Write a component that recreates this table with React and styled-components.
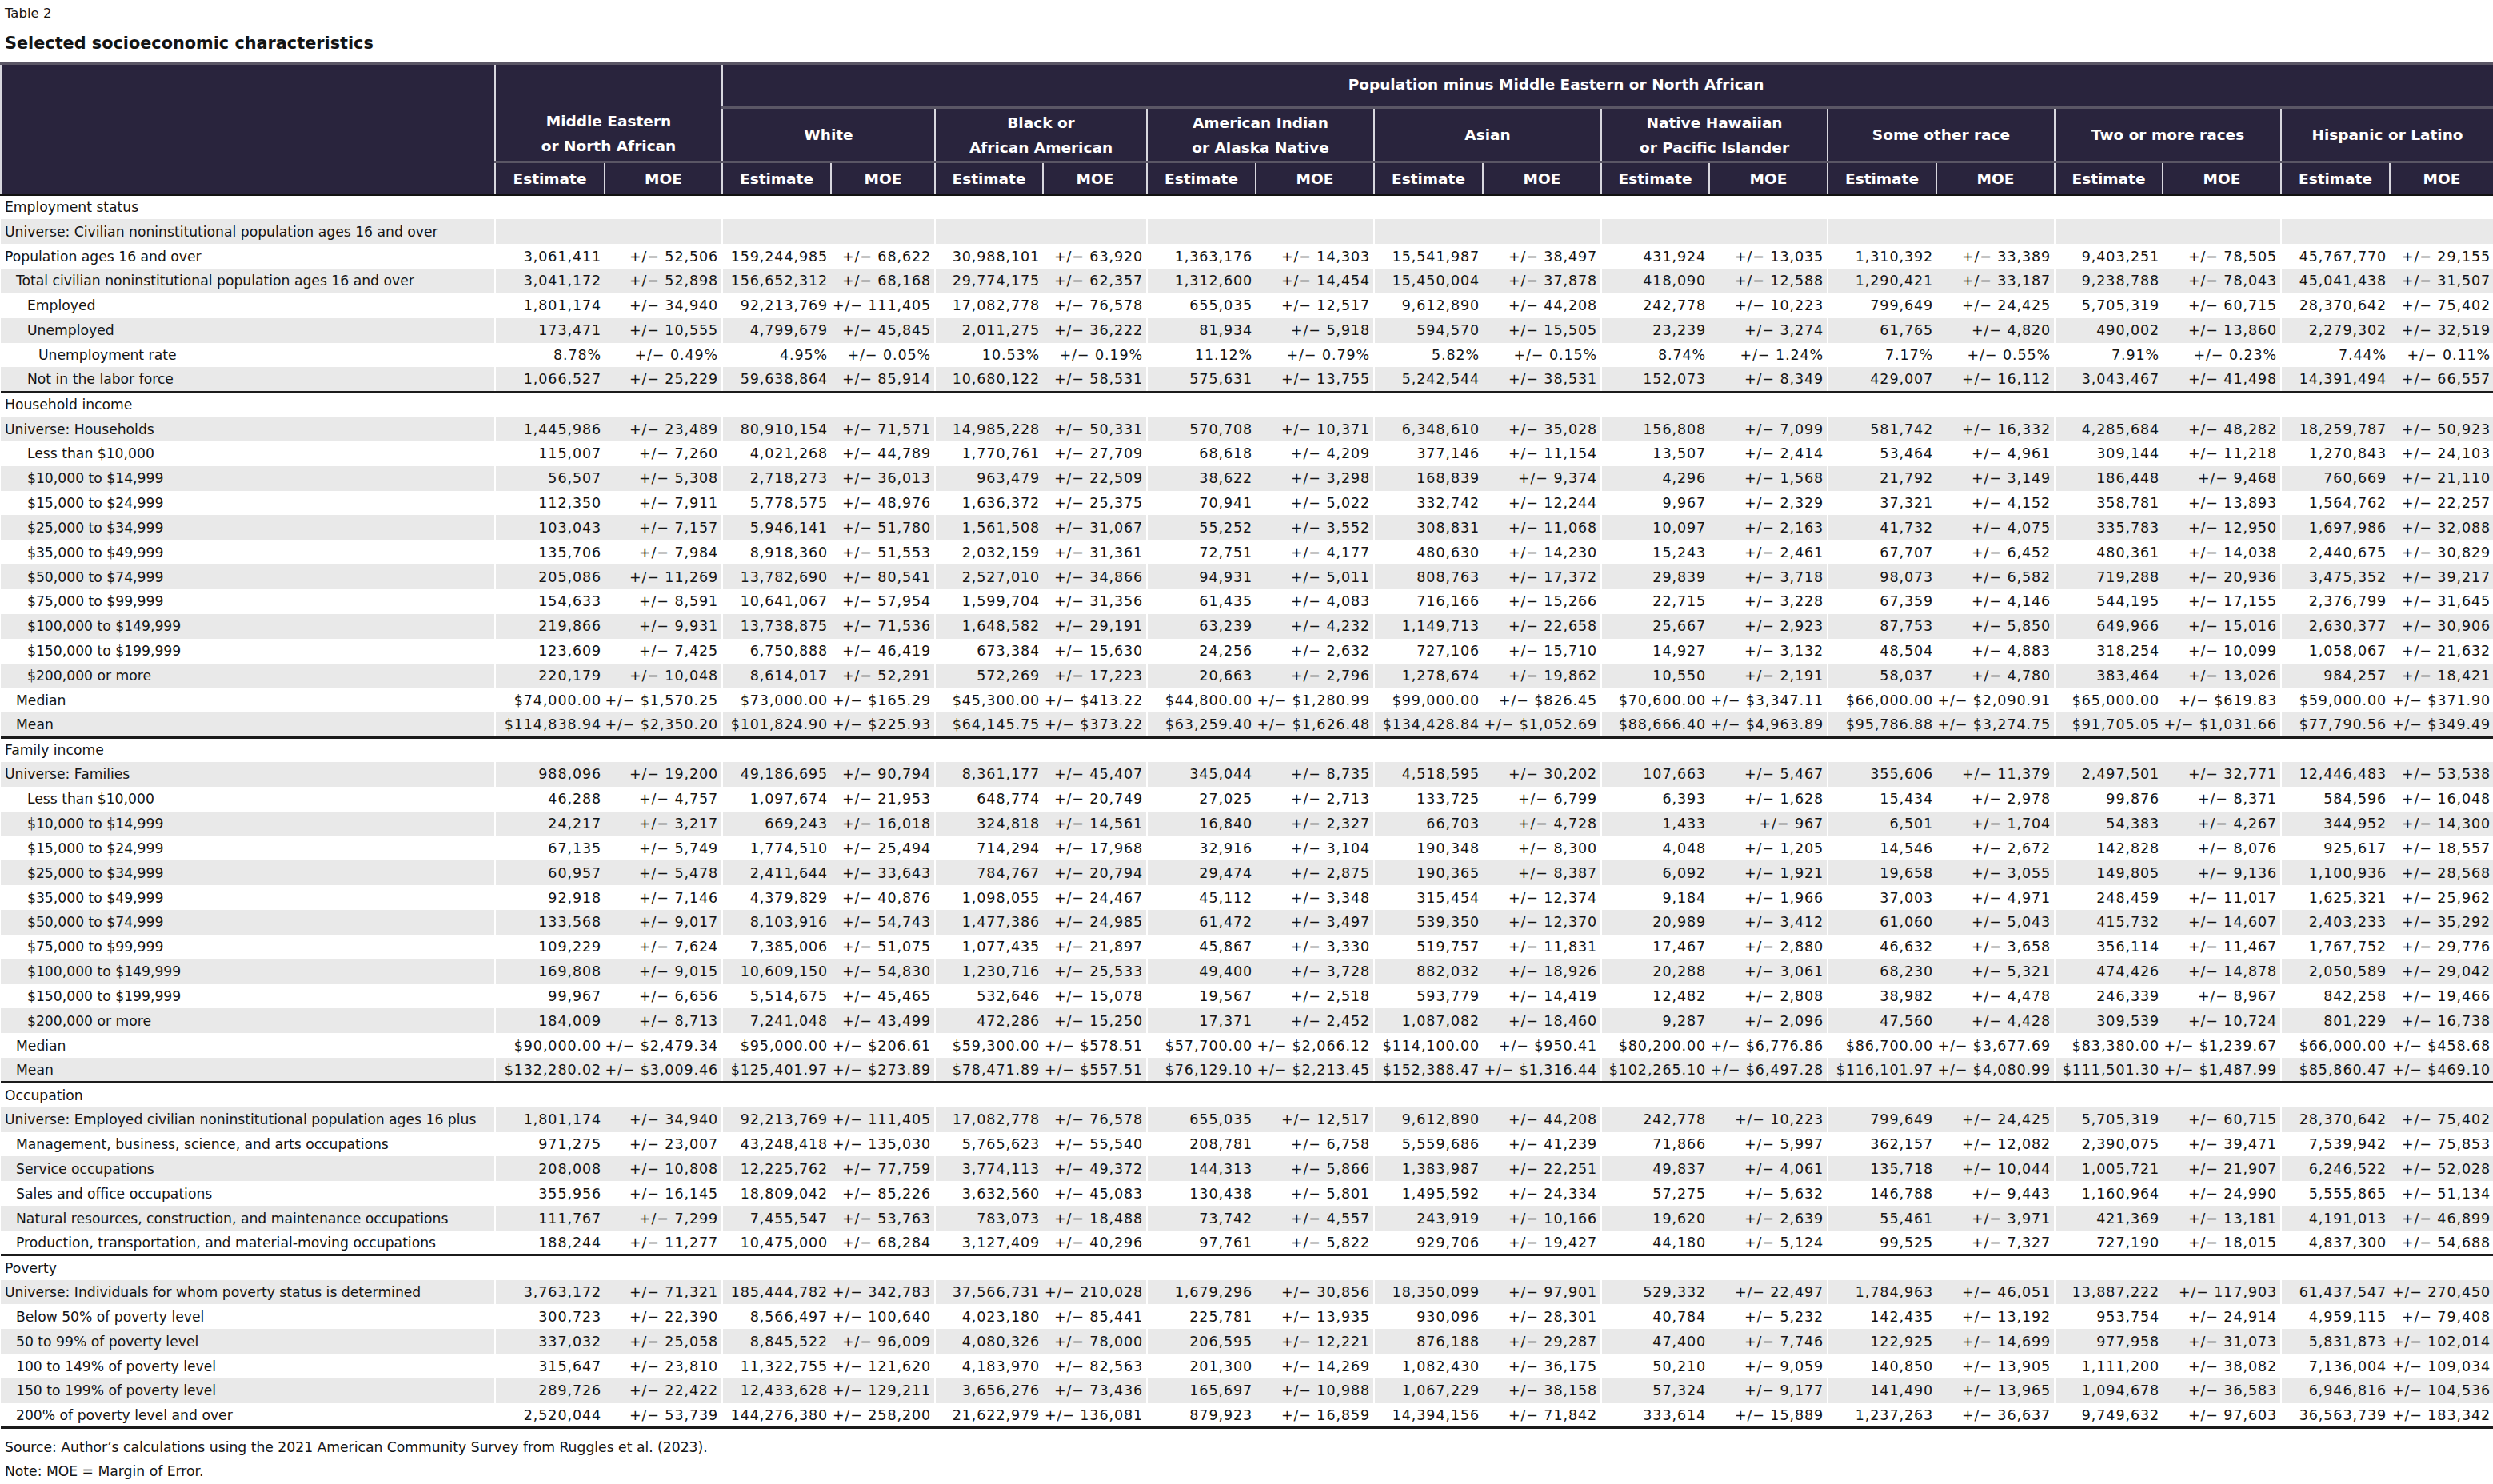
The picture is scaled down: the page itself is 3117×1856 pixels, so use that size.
import React from "react";
import styled, { createGlobalStyle } from "styled-components";

const GlobalStyle = createGlobalStyle`
  html, body {
    margin: 0;
    padding: 0;
    background: #ffffff;
  }
  body {
    font-family: "DejaVu Sans", "Liberation Sans", sans-serif;
    color: #141414;
  }
`;

const Page = styled.div`
  width: 3117px;
`;

const Caption = styled.div`
  padding: 5px 6px 11px;
`;

const TableNo = styled.div`
  font-size: 16.5px;
  line-height: 24px;
`;

const Heading = styled.div`
  margin-top: 12px;
  font-size: 20.8px;
  font-weight: bold;
  line-height: 26px;
`;

const Table = styled.table`
  width: 3117px;
  table-layout: fixed;
  border-collapse: collapse;
  border-bottom: 3px solid #1b1b1b;
`;

const HeadRow = styled.tr`
  height: ${(p) => p.$h}px;
`;

const HeadCell = styled.th`
  background: #29243d;
  color: #ffffff;
  font-size: 18.5px;
  font-weight: bold;
  line-height: 31px;
  text-align: center;
  vertical-align: ${(p) => (p.$bottom ? "bottom" : "middle")};
  padding: ${(p) => (p.$bottom ? "0 4px 3px" : p.$top ? "0 134px 4px 4px" : "0 4px")};
  border: 2px solid #d8d7de;
  border-top: 3px solid #5a5665;
  ${(p) => p.$last && "border-bottom: 2px solid #121212;"}
`;

const BodyRow = styled.tr`
  height: 30.85px;
  background: ${(p) => (p.$shade ? "#e9e9e9" : "#ffffff")};
  ${(p) => p.$sep && "border-top: 3px solid #1b1b1b;"}
`;

const LabelCell = styled.td`
  font-size: 17.2px;
  padding: 0 4px 0 ${(p) => 5 + p.$level * 14}px;
  white-space: nowrap;
  overflow: hidden;
`;

const ValueCell = styled.td`
  font-size: 17.5px;
  letter-spacing: 0.9px;
  text-align: right;
  padding: 0 4px 0 0;
  white-space: nowrap;
  ${(p) => p.$first && "border-left: 2px solid #ffffff;"}
`;

const Footer = styled.div`
  padding: 8px 6px 0;
  font-size: 17.2px;
  line-height: 30px;
`;

const widths = [618, 137, 147, 136, 130, 135, 130, 136, 148, 136, 148, 135, 148, 136, 148, 135, 148, 136, 130];

const groups = [
  ["White"],
  ["Black or", "African American"],
  ["American Indian", "or Alaska Native"],
  ["Asian"],
  ["Native Hawaiian", "or Pacific Islander"],
  ["Some other race"],
  ["Two or more races"],
  ["Hispanic or Latino"],
];

const sections = [
  {
    title: "Employment status",
    rows: [
      ["Universe: Civilian noninstitutional population ages 16 and over", 0, null],
      ["Population ages 16 and over", 0, "3,061,411 52,506 159,244,985 68,622 30,988,101 63,920 1,363,176 14,303 15,541,987 38,497 431,924 13,035 1,310,392 33,389 9,403,251 78,505 45,767,770 29,155"],
      ["Total civilian noninstitutional population ages 16 and over", 1, "3,041,172 52,898 156,652,312 68,168 29,774,175 62,357 1,312,600 14,454 15,450,004 37,878 418,090 12,588 1,290,421 33,187 9,238,788 78,043 45,041,438 31,507"],
      ["Employed", 2, "1,801,174 34,940 92,213,769 111,405 17,082,778 76,578 655,035 12,517 9,612,890 44,208 242,778 10,223 799,649 24,425 5,705,319 60,715 28,370,642 75,402"],
      ["Unemployed", 2, "173,471 10,555 4,799,679 45,845 2,011,275 36,222 81,934 5,918 594,570 15,505 23,239 3,274 61,765 4,820 490,002 13,860 2,279,302 32,519"],
      ["Unemployment rate", 3, "8.78% 0.49% 4.95% 0.05% 10.53% 0.19% 11.12% 0.79% 5.82% 0.15% 8.74% 1.24% 7.17% 0.55% 7.91% 0.23% 7.44% 0.11%"],
      ["Not in the labor force", 2, "1,066,527 25,229 59,638,864 85,914 10,680,122 58,531 575,631 13,755 5,242,544 38,531 152,073 8,349 429,007 16,112 3,043,467 41,498 14,391,494 66,557"],
    ],
  },
  {
    title: "Household income",
    rows: [
      ["Universe: Households", 0, "1,445,986 23,489 80,910,154 71,571 14,985,228 50,331 570,708 10,371 6,348,610 35,028 156,808 7,099 581,742 16,332 4,285,684 48,282 18,259,787 50,923"],
      ["Less than $10,000", 2, "115,007 7,260 4,021,268 44,789 1,770,761 27,709 68,618 4,209 377,146 11,154 13,507 2,414 53,464 4,961 309,144 11,218 1,270,843 24,103"],
      ["$10,000 to $14,999", 2, "56,507 5,308 2,718,273 36,013 963,479 22,509 38,622 3,298 168,839 9,374 4,296 1,568 21,792 3,149 186,448 9,468 760,669 21,110"],
      ["$15,000 to $24,999", 2, "112,350 7,911 5,778,575 48,976 1,636,372 25,375 70,941 5,022 332,742 12,244 9,967 2,329 37,321 4,152 358,781 13,893 1,564,762 22,257"],
      ["$25,000 to $34,999", 2, "103,043 7,157 5,946,141 51,780 1,561,508 31,067 55,252 3,552 308,831 11,068 10,097 2,163 41,732 4,075 335,783 12,950 1,697,986 32,088"],
      ["$35,000 to $49,999", 2, "135,706 7,984 8,918,360 51,553 2,032,159 31,361 72,751 4,177 480,630 14,230 15,243 2,461 67,707 6,452 480,361 14,038 2,440,675 30,829"],
      ["$50,000 to $74,999", 2, "205,086 11,269 13,782,690 80,541 2,527,010 34,866 94,931 5,011 808,763 17,372 29,839 3,718 98,073 6,582 719,288 20,936 3,475,352 39,217"],
      ["$75,000 to $99,999", 2, "154,633 8,591 10,641,067 57,954 1,599,704 31,356 61,435 4,083 716,166 15,266 22,715 3,228 67,359 4,146 544,195 17,155 2,376,799 31,645"],
      ["$100,000 to $149,999", 2, "219,866 9,931 13,738,875 71,536 1,648,582 29,191 63,239 4,232 1,149,713 22,658 25,667 2,923 87,753 5,850 649,966 15,016 2,630,377 30,906"],
      ["$150,000 to $199,999", 2, "123,609 7,425 6,750,888 46,419 673,384 15,630 24,256 2,632 727,106 15,710 14,927 3,132 48,504 4,883 318,254 10,099 1,058,067 21,632"],
      ["$200,000 or more", 2, "220,179 10,048 8,614,017 52,291 572,269 17,223 20,663 2,796 1,278,674 19,862 10,550 2,191 58,037 4,780 383,464 13,026 984,257 18,421"],
      ["Median", 1, "$74,000.00 $1,570.25 $73,000.00 $165.29 $45,300.00 $413.22 $44,800.00 $1,280.99 $99,000.00 $826.45 $70,600.00 $3,347.11 $66,000.00 $2,090.91 $65,000.00 $619.83 $59,000.00 $371.90"],
      ["Mean", 1, "$114,838.94 $2,350.20 $101,824.90 $225.93 $64,145.75 $373.22 $63,259.40 $1,626.48 $134,428.84 $1,052.69 $88,666.40 $4,963.89 $95,786.88 $3,274.75 $91,705.05 $1,031.66 $77,790.56 $349.49"],
    ],
  },
  {
    title: "Family income",
    rows: [
      ["Universe: Families", 0, "988,096 19,200 49,186,695 90,794 8,361,177 45,407 345,044 8,735 4,518,595 30,202 107,663 5,467 355,606 11,379 2,497,501 32,771 12,446,483 53,538"],
      ["Less than $10,000", 2, "46,288 4,757 1,097,674 21,953 648,774 20,749 27,025 2,713 133,725 6,799 6,393 1,628 15,434 2,978 99,876 8,371 584,596 16,048"],
      ["$10,000 to $14,999", 2, "24,217 3,217 669,243 16,018 324,818 14,561 16,840 2,327 66,703 4,728 1,433 967 6,501 1,704 54,383 4,267 344,952 14,300"],
      ["$15,000 to $24,999", 2, "67,135 5,749 1,774,510 25,494 714,294 17,968 32,916 3,104 190,348 8,300 4,048 1,205 14,546 2,672 142,828 8,076 925,617 18,557"],
      ["$25,000 to $34,999", 2, "60,957 5,478 2,411,644 33,643 784,767 20,794 29,474 2,875 190,365 8,387 6,092 1,921 19,658 3,055 149,805 9,136 1,100,936 28,568"],
      ["$35,000 to $49,999", 2, "92,918 7,146 4,379,829 40,876 1,098,055 24,467 45,112 3,348 315,454 12,374 9,184 1,966 37,003 4,971 248,459 11,017 1,625,321 25,962"],
      ["$50,000 to $74,999", 2, "133,568 9,017 8,103,916 54,743 1,477,386 24,985 61,472 3,497 539,350 12,370 20,989 3,412 61,060 5,043 415,732 14,607 2,403,233 35,292"],
      ["$75,000 to $99,999", 2, "109,229 7,624 7,385,006 51,075 1,077,435 21,897 45,867 3,330 519,757 11,831 17,467 2,880 46,632 3,658 356,114 11,467 1,767,752 29,776"],
      ["$100,000 to $149,999", 2, "169,808 9,015 10,609,150 54,830 1,230,716 25,533 49,400 3,728 882,032 18,926 20,288 3,061 68,230 5,321 474,426 14,878 2,050,589 29,042"],
      ["$150,000 to $199,999", 2, "99,967 6,656 5,514,675 45,465 532,646 15,078 19,567 2,518 593,779 14,419 12,482 2,808 38,982 4,478 246,339 8,967 842,258 19,466"],
      ["$200,000 or more", 2, "184,009 8,713 7,241,048 43,499 472,286 15,250 17,371 2,452 1,087,082 18,460 9,287 2,096 47,560 4,428 309,539 10,724 801,229 16,738"],
      ["Median", 1, "$90,000.00 $2,479.34 $95,000.00 $206.61 $59,300.00 $578.51 $57,700.00 $2,066.12 $114,100.00 $950.41 $80,200.00 $6,776.86 $86,700.00 $3,677.69 $83,380.00 $1,239.67 $66,000.00 $458.68"],
      ["Mean", 1, "$132,280.02 $3,009.46 $125,401.97 $273.89 $78,471.89 $557.51 $76,129.10 $2,213.45 $152,388.47 $1,316.44 $102,265.10 $6,497.28 $116,101.97 $4,080.99 $111,501.30 $1,487.99 $85,860.47 $469.10"],
    ],
  },
  {
    title: "Occupation",
    rows: [
      ["Universe: Employed civilian noninstitutional population ages 16 plus", 0, "1,801,174 34,940 92,213,769 111,405 17,082,778 76,578 655,035 12,517 9,612,890 44,208 242,778 10,223 799,649 24,425 5,705,319 60,715 28,370,642 75,402"],
      ["Management, business, science, and arts occupations", 1, "971,275 23,007 43,248,418 135,030 5,765,623 55,540 208,781 6,758 5,559,686 41,239 71,866 5,997 362,157 12,082 2,390,075 39,471 7,539,942 75,853"],
      ["Service occupations", 1, "208,008 10,808 12,225,762 77,759 3,774,113 49,372 144,313 5,866 1,383,987 22,251 49,837 4,061 135,718 10,044 1,005,721 21,907 6,246,522 52,028"],
      ["Sales and office occupations", 1, "355,956 16,145 18,809,042 85,226 3,632,560 45,083 130,438 5,801 1,495,592 24,334 57,275 5,632 146,788 9,443 1,160,964 24,990 5,555,865 51,134"],
      ["Natural resources, construction, and maintenance occupations", 1, "111,767 7,299 7,455,547 53,763 783,073 18,488 73,742 4,557 243,919 10,166 19,620 2,639 55,461 3,971 421,369 13,181 4,191,013 46,899"],
      ["Production, transportation, and material-moving occupations", 1, "188,244 11,277 10,475,000 68,284 3,127,409 40,296 97,761 5,822 929,706 19,427 44,180 5,124 99,525 7,327 727,190 18,015 4,837,300 54,688"],
    ],
  },
  {
    title: "Poverty",
    rows: [
      ["Universe: Individuals for whom poverty status is determined", 0, "3,763,172 71,321 185,444,782 342,783 37,566,731 210,028 1,679,296 30,856 18,350,099 97,901 529,332 22,497 1,784,963 46,051 13,887,222 117,903 61,437,547 270,450"],
      ["Below 50% of poverty level", 1, "300,723 22,390 8,566,497 100,640 4,023,180 85,441 225,781 13,935 930,096 28,301 40,784 5,232 142,435 13,192 953,754 24,914 4,959,115 79,408"],
      ["50 to 99% of poverty level", 1, "337,032 25,058 8,845,522 96,009 4,080,326 78,000 206,595 12,221 876,188 29,287 47,400 7,746 122,925 14,699 977,958 31,073 5,831,873 102,014"],
      ["100 to 149% of poverty level", 1, "315,647 23,810 11,322,755 121,620 4,183,970 82,563 201,300 14,269 1,082,430 36,175 50,210 9,059 140,850 13,905 1,111,200 38,082 7,136,004 109,034"],
      ["150 to 199% of poverty level", 1, "289,726 22,422 12,433,628 129,211 3,656,276 73,436 165,697 10,988 1,067,229 38,158 57,324 9,177 141,490 13,965 1,094,678 36,583 6,946,816 104,536"],
      ["200% of poverty level and over", 1, "2,520,044 53,739 144,276,380 258,200 21,622,979 136,081 879,923 16,859 14,394,156 71,842 333,614 15,889 1,237,263 36,637 9,749,632 97,603 36,563,739 183,342"],
    ],
  },
];

const emptyCells = Array.from({ length: 18 }, (_, i) => i);

function DataRow({ label, level, values, shade }) {
  const cells = values ? values.split(" ") : null;
  return (
    <BodyRow $shade={shade}>
      <LabelCell $level={level}>{label}</LabelCell>
      {emptyCells.map((i) => (
        <ValueCell key={i} $first={i % 2 === 0}>
          {cells ? (i % 2 === 1 ? `+/\u2212 ${cells[i]}` : cells[i]) : ""}
        </ValueCell>
      ))}
    </BodyRow>
  );
}

function Section({ title, rows, first }) {
  return (
    <>
      <BodyRow $sep={!first}>
        <LabelCell $level={0}>{title}</LabelCell>
        {emptyCells.map((i) => (
          <ValueCell key={i} />
        ))}
      </BodyRow>
      {rows.map(([label, level, values], i) => (
        <DataRow key={label + i} label={label} level={level} values={values} shade={i % 2 === 0} />
      ))}
    </>
  );
}

export default function App() {
  return (
    <Page>
      <GlobalStyle />
      <Caption>
        <TableNo>Table 2</TableNo>
        <Heading>Selected socioeconomic characteristics</Heading>
      </Caption>
      <Table>
        <colgroup>
          {widths.map((w, i) => (
            <col key={i} style={{ width: w }} />
          ))}
        </colgroup>
        <thead>
          <HeadRow $h={55}>
            <HeadCell rowSpan={3} $last />
            <HeadCell rowSpan={2} colSpan={2} $bottom>
              Middle Eastern
              <br />
              or North African
            </HeadCell>
            <HeadCell colSpan={16} $top>
              Population minus Middle Eastern or North African
            </HeadCell>
          </HeadRow>
          <HeadRow $h={68}>
            {groups.map((g) => (
              <HeadCell key={g.join()} colSpan={2}>
                {g.map((line, i) => (
                  <React.Fragment key={line}>
                    {i > 0 && <br />}
                    {line}
                  </React.Fragment>
                ))}
              </HeadCell>
            ))}
          </HeadRow>
          <HeadRow $h={41}>
            {emptyCells.map((i) => (
              <HeadCell key={i} $last>
                {i % 2 === 0 ? "Estimate" : "MOE"}
              </HeadCell>
            ))}
          </HeadRow>
        </thead>
        <tbody>
          {sections.map((s, i) => (
            <Section key={s.title} title={s.title} rows={s.rows} first={i === 0} />
          ))}
        </tbody>
      </Table>
      <Footer>
        <div>Source: Author’s calculations using the 2021 American Community Survey from Ruggles et al. (2023).</div>
        <div>Note: MOE = Margin of Error.</div>
      </Footer>
    </Page>
  );
}
